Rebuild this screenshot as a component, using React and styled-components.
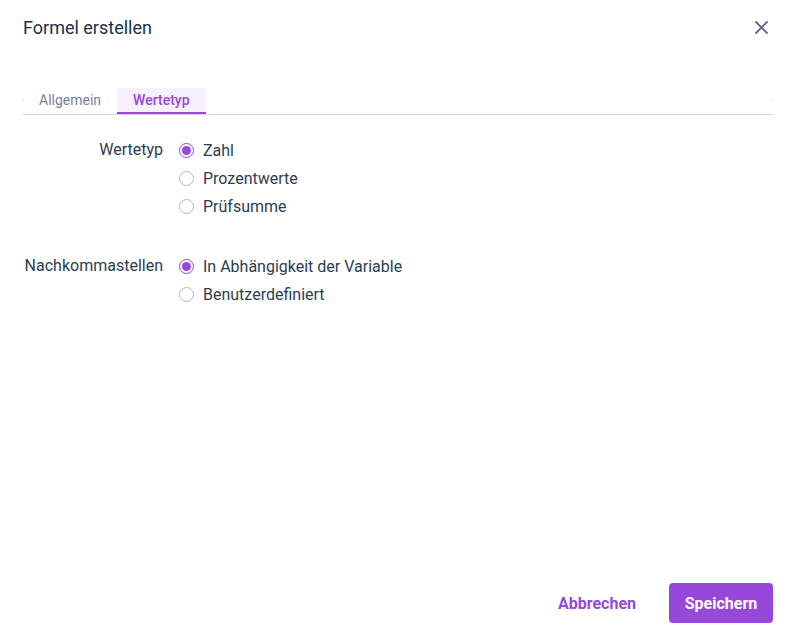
import React, { useState } from 'react'
import styled, { createGlobalStyle } from 'styled-components'

const GlobalStyle = createGlobalStyle`
    html, body {
        margin: 0;
        padding: 0;
        background: #ffffff;
    }
    body {
        font-family: Roboto, "Liberation Sans", sans-serif;
        color: #2c3e50;
    }
`

const Dialog = styled.div`
    width: 795px;
    height: 636px;
    box-sizing: border-box;
    padding: 14px 22px 13px 23px;
    display: flex;
    flex-direction: column;
`

const Header = styled.div`
    display: flex;
    align-items: center;
    justify-content: space-between;
    height: 26px;
`

const Title = styled.div`
    font-size: 18px;
    font-weight: 400;
    color: #17324a;
`

const CloseButton = styled.button`
    border: none;
    background: none;
    padding: 0;
    width: 16px;
    height: 16px;
    display: flex;
    align-items: center;
    justify-content: center;
    cursor: pointer;
    margin-right: 4px;
`

const Tabs = styled.div`
    margin-top: 48px;
    display: flex;
    border-bottom: 1px solid #d6d6de;
    padding-left: 10px;
    position: relative;
    &::before, &::after {
        content: '';
        position: absolute;
        top: 11px;
        width: 1px;
        height: 1px;
        background: #c8c8d0;
    }
    &::before { left: 0; }
    &::after { right: 0; }
`

const Tab = styled.div`
    height: 24px;
    padding: 0 ${({ $active }) => ($active ? '16px' : '16px 0 6px')};
    display: flex;
    align-items: center;
    font-size: 14px;
    font-weight: ${({ $active }) => ($active ? 500 : 400)};
    color: ${({ $active }) => ($active ? '#9747d9' : '#7b7f9b')};
    background: ${({ $active }) => ($active ? '#f7f0fd' : 'transparent')};
    border-bottom: 2px solid ${({ $active }) => ($active ? '#9747d9' : 'transparent')};
    cursor: pointer;
`

const FormBody = styled.div`
    flex: 1;
    padding-top: 21px;
    display: flex;
    flex-direction: column;
    gap: 32px;
`

const FieldRow = styled.div`
    display: grid;
    grid-template-columns: 140px 1fr;
    column-gap: 16px;
    align-items: start;
`

const Label = styled.div`
    text-align: right;
    font-size: 16px;
    line-height: 28px;
    color: #2c3e50;
`

const Options = styled.div`
    display: flex;
    flex-direction: column;
`

const Option = styled.label`
    display: flex;
    align-items: center;
    gap: 9px;
    height: 28px;
    font-size: 16px;
    color: #2c3e50;
    cursor: pointer;
`

const RadioCircle = styled.span`
    width: 15px;
    height: 15px;
    border-radius: 50%;
    box-sizing: border-box;
    border: 1px solid ${({ $checked }) => ($checked ? '#9747d9' : '#b4b7c6')};
    display: flex;
    align-items: center;
    justify-content: center;
    &::after {
        content: '';
        width: 9px;
        height: 9px;
        border-radius: 50%;
        background: ${({ $checked }) => ($checked ? '#9747d9' : 'transparent')};
    }
`

const Footer = styled.div`
    display: flex;
    justify-content: flex-end;
    align-items: center;
    gap: 12px;
`

const TextButton = styled.button`
    border: none;
    background: none;
    height: 40px;
    padding: 0 21px;
    font-family: inherit;
    font-size: 16px;
    font-weight: 700;
    color: #9747d9;
    cursor: pointer;
`

const PrimaryButton = styled.button`
    border: none;
    border-radius: 4px;
    background: #9747d9;
    height: 40px;
    width: 104px;
    font-family: inherit;
    font-size: 16px;
    font-weight: 700;
    color: #ffffff;
    cursor: pointer;
`

const CloseIcon = () => (
    <svg width="13" height="13" viewBox="0 0 13 13">
        <path d="M1 1 L12 12 M12 1 L1 12" stroke="#5c6690" strokeWidth="1.8" strokeLinecap="round" />
    </svg>
)

const RadioGroup = ({ options, value, onChange }) => (
    <Options>
        {options.map((opt) => (
            <Option key={opt} onClick={() => onChange(opt)}>
                <RadioCircle $checked={value === opt} />
                {opt}
            </Option>
        ))}
    </Options>
)

const App = () => {
    const [type, setType] = useState('Zahl')
    const [decimals, setDecimals] = useState('In Abhängigkeit der Variable')

    return (
        <>
            <GlobalStyle />
            <Dialog>
                <Header>
                    <Title>Formel erstellen</Title>
                    <CloseButton aria-label="Schließen">
                        <CloseIcon />
                    </CloseButton>
                </Header>
                <Tabs>
                    <Tab>Allgemein</Tab>
                    <Tab $active>Wertetyp</Tab>
                </Tabs>
                <FormBody>
                    <FieldRow>
                        <Label>Wertetyp</Label>
                        <RadioGroup
                            options={['Zahl', 'Prozentwerte', 'Prüfsumme']}
                            value={type}
                            onChange={setType}
                        />
                    </FieldRow>
                    <FieldRow>
                        <Label>Nachkommastellen</Label>
                        <RadioGroup
                            options={['In Abhängigkeit der Variable', 'Benutzerdefiniert']}
                            value={decimals}
                            onChange={setDecimals}
                        />
                    </FieldRow>
                </FormBody>
                <Footer>
                    <TextButton>Abbrechen</TextButton>
                    <PrimaryButton>Speichern</PrimaryButton>
                </Footer>
            </Dialog>
        </>
    )
}

export default App
